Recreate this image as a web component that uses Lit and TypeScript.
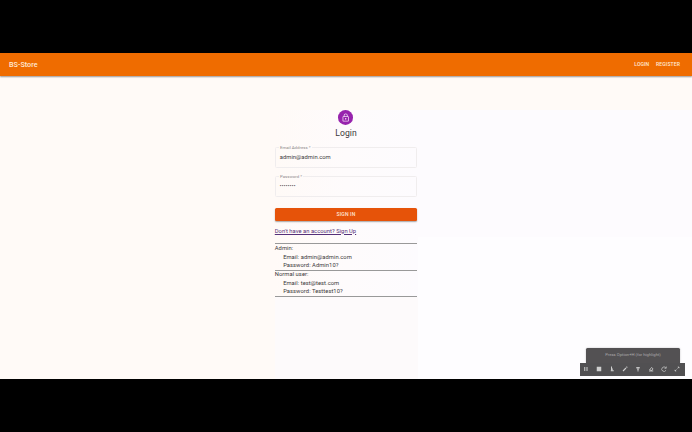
import { LitElement, html, css, svg } from "lit";
import { customElement } from "lit/decorators.js";

const toolIcons = [
  svg`<path d="M3.5 2v8M8 2v8" stroke-width="2"/>`,
  svg`<rect x="1.5" y="1.5" width="9" height="9" fill="currentColor" stroke="none"/>`,
  svg`<path d="M5 1v8M5 5.5l3 1M3.5 9.5h6M6 7v3" stroke-width="2"/>`,
  svg`<path d="M2 10l6-6M9 3l1.5-1.5" stroke-width="2.2"/>`,
  svg`<path d="M2.5 3h7M3.5 4l2.5 3 2.5-3M6 5v6" stroke-width="1.8"/>`,
  svg`<path d="M2 10h8.5M3 8l4-5 3 2.5L8 9z" stroke-width="1.6"/>`,
  svg`<path d="M9.5 3.5A4.5 4.5 0 1 0 10 8.5M10.5 1v3.5H7" stroke-width="1.4"/>`,
  svg`<path d="M2 10l3-3M7 5l3-3M2 7.5V10h2.5M7.5 2H10v2.5" stroke-width="1.4"/>`,
];

@customElement("app-root")
export class AppRoot extends LitElement {
  static styles = css`
    :host {
      display: block;
      width: 692px;
      height: 432px;
      box-sizing: border-box;
      padding: 53px 0;
      background: #000;
      overflow: hidden;
      position: relative;
      font-family: Roboto, sans-serif;
      color: #3a3839;
    }
    .page {
      height: 326px;
      background:
        linear-gradient(#fdfafb, #fdfafb) 275px 244px / 143px 82px no-repeat,
        linear-gradient(#fefdff, #fefdff) 418px 184px / 274px 142px no-repeat,
        linear-gradient(90deg, #fffaf7 0, #fffaf7 275px, #fefbfc 346px, #fdfbfe 418px) 0 57px / 692px 269px no-repeat,
        #fffaf7;
    }
    .bar {
      height: 23px;
      box-sizing: border-box;
      padding: 0 12px 1px 9px;
      display: flex;
      align-items: center;
      background: #ef6c00;
      color: #ffe9d6;
      box-shadow: 0 1px 1.5px rgba(0, 0, 0, 0.4);
    }
    .brand {
      flex: 1;
      font-size: 7.2px;
      font-weight: 500;
      letter-spacing: 0.02px;
    }
    .nav {
      display: flex;
      gap: 6.8px;
      font-size: 5.1px;
      font-weight: 500;
      letter-spacing: 0.08px;
    }
    .form {
      width: 142.5px;
      margin: 0 auto;
      padding-top: 34px;
      display: flex;
      flex-direction: column;
    }
    .avatar {
      align-self: center;
      width: 15px;
      height: 14.6px;
      margin-right: 1px;
      border-radius: 50%;
      background: #9723ad;
      display: grid;
      place-items: center;
    }
    .avatar svg {
      width: 9.4px;
      height: 9.4px;
      fill: #f0d9f4;
    }
    h1 {
      margin: 3px 0 6.2px;
      height: 11px;
      line-height: 11px;
      text-align: center;
      font-size: 8.6px;
      font-weight: 400;
      letter-spacing: 0.04px;
    }
    .field {
      height: 23px;
      box-sizing: border-box;
      margin: 0 0 5.9px;
      padding: 0 4px;
      border: 1px solid #f0edee;
      border-radius: 1.5px;
      font-size: 5.8px;
      letter-spacing: 0.04px;
      min-width: 0;
    }
    .field legend {
      height: 5px;
      line-height: 5px;
      padding: 0 1px;
      margin-left: -0.8px;
      font-size: 4.3px;
      letter-spacing: 0.02px;
      color: #8b8788;
    }
    .value {
      height: 14px;
      line-height: 14px;
    }
    .dots {
      font-size: 5px;
      line-height: 15.4px;
      letter-spacing: 0.3px;
    }
    .submit {
      height: 13.2px;
      margin: 5.2px 0 0;
      padding: 0;
      border: 0;
      border-radius: 1.5px;
      background: #e65309;
      color: #ffe5d5;
      font: 500 5.1px/13px Roboto, sans-serif;
      letter-spacing: 0.14px;
      box-shadow: 0 1px 1.5px rgba(0, 0, 0, 0.35);
    }
    .link {
      align-self: flex-start;
      margin: 5.7px 0 7.8px;
      height: 9px;
      line-height: 9px;
      font-size: 5.8px;
      letter-spacing: 0.03px;
      color: #553079;
      text-decoration: underline;
    }
    .account {
      border-top: 1px solid #999;
      font-size: 5.8px;
      line-height: 8.7px;
      letter-spacing: 0.05px;
      height: 25.2px;
    }
    .account:last-child {
      border-bottom: 1px solid #999;
    }
    .account p {
      margin: 0;
      position: relative;
      top: -0.6px;
    }
    .account .detail {
      padding-left: 8.4px;
    }
    .recorder {
      position: absolute;
      left: 580px;
      top: 347.5px;
      width: 105px;
      color: #cfcfcf;
    }
    .hint {
      height: 15px;
      margin: 0 5px 0 6px;
      line-height: 14px;
      text-align: center;
      font-size: 4.2px;
      background: #535153;
      border-radius: 1.5px 1.5px 0 0;
      color: #aaa8aa;
      box-shadow: 0 0 2px rgba(0, 0, 0, 0.25);
    }
    .tools {
      height: 13px;
      display: grid;
      grid-template-columns: repeat(8, 13px);
      margin-left: -0.5px;
      place-items: center;
      background: #515052;
    }
    .tools svg {
      width: 6px;
      height: 6px;
      margin-right: 1px;
      fill: none;
      stroke: currentColor;
    }
  `;

  render() {
    return html`
      <div class="page">
        <header class="bar">
          <span class="brand">BS-Store</span>
          <nav class="nav"><span>LOGIN</span><span>REGISTER</span></nav>
        </header>
        <main class="form">
          <div class="avatar">
            <svg viewBox="0 0 24 24">
              <path fill-rule="evenodd" d="M12 1a5 5 0 0 0-5 5v2H6a2 2 0 0 0-2 2v10a2 2 0 0 0 2 2h12a2 2 0 0 0 2-2V10a2 2 0 0 0-2-2h-1V6a5 5 0 0 0-5-5zm0 2a3 3 0 0 1 3 3v2H9V6a3 3 0 0 1 3-3zM6 10h12v10H6zM12 13a2 2 0 1 0 0 4 2 2 0 0 0 0-4z"/>
            </svg>
          </div>
          <h1>Login</h1>
          <fieldset class="field">
            <legend>Email Address *</legend>
            <div class="value">admin@admin.com</div>
          </fieldset>
          <fieldset class="field">
            <legend>Password *</legend>
            <div class="value dots">••••••••</div>
          </fieldset>
          <button class="submit">SIGN IN</button>
          <a class="link">Don't have an account? Sign Up</a>
          <section class="account">
            <p>Admin:</p>
            <p class="detail">Email: admin@admin.com</p>
            <p class="detail">Password: Admin10?</p>
          </section>
          <section class="account">
            <p>Normal user:</p>
            <p class="detail">Email: test@test.com</p>
            <p class="detail">Password: Testtest10?</p>
          </section>
        </main>
      </div>
      <aside class="recorder">
        <div class="hint">Press Option+H (for highlight)</div>
        <div class="tools">
          ${toolIcons.map((icon) => html`<svg viewBox="0 0 12 12">${icon}</svg>`)}
        </div>
      </aside>
    `;
  }
}
